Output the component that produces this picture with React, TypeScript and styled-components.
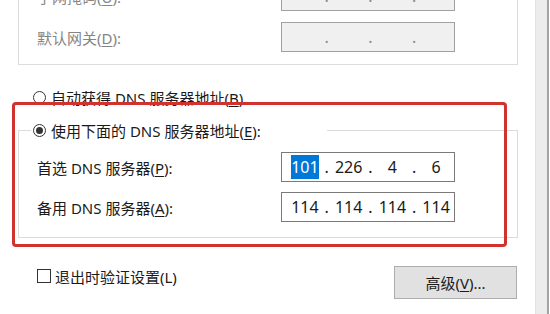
import React from "react";
import styled, { createGlobalStyle } from "styled-components";

const GlobalStyle = createGlobalStyle`
    html, body {
        margin: 0;
        padding: 0;
        background: #ffffff;
    }
    body {
        font-family: "Noto Sans", "Noto Sans CJK SC", sans-serif;
        font-size: 15px;
        color: #1a1a1a;
    }
`;

const Screen = styled.div`
    position: relative;
    width: 550px;
    height: 314px;
    display: flex;
    overflow: hidden;
    background: #ffffff;
`;

const Sheet = styled.div`
    flex: 1;
    display: flex;
    flex-direction: column;
    padding: 0 17px 0 18px;
`;

const WindowEdge = styled.div`
    width: 11px;
    background: #ececec;
    border-left: 1px solid #e2e2e2;
    border-right: 2px solid #a3a3a3;
    margin-right: 1px;
`;

const StaticGroup = styled.div`
    margin-top: -20px;
    border: 1px solid #dcdcdc;
    display: flex;
    flex-direction: column;
    gap: 11px;
    padding: 0 0 12px 18px;
`;

const FieldRow = styled.div`
    display: flex;
    align-items: center;
    height: 30px;
`;

const FieldLabel = styled.span<{ $disabled?: boolean }>`
    width: 244px;
    white-space: nowrap;
    color: ${(p) => (p.$disabled ? "#858585" : "#1a1a1a")};
`;

const Key = styled.span`
    text-decoration: underline;
    text-underline-offset: 2px;
`;

const IpBox = styled.div<{ $disabled?: boolean }>`
    box-sizing: border-box;
    width: 174px;
    height: 30px;
    padding-left: 5px;
    display: flex;
    align-items: center;
    border: 1px solid ${(p) => (p.$disabled ? "#a0a0a0" : "#7a7a7a")};
    background: ${(p) => (p.$disabled ? "#f0f0f0" : "#ffffff")};
    color: ${(p) => (p.$disabled ? "#8a8a8a" : "#1a1a1a")};
    font-size: 16px;
`;

const IpField = styled.span`
    width: 36px;
    text-align: center;
    white-space: nowrap;
`;

const IpDot = styled.span`
    width: 8px;
    text-align: center;
`;

const Selected = styled.span`
    background: #0078d7;
    color: #ffffff;
    padding: 1px 0;
`;

const OptionRow = styled.div`
    display: flex;
    align-items: center;
    gap: 5px;
    height: 20px;
    white-space: nowrap;
`;

const AutoOption = styled(OptionRow)`
    margin-top: 22px;
    padding-left: 15px;
`;

const RadioMark = styled.span<{ $checked?: boolean }>`
    box-sizing: border-box;
    width: 13px;
    height: 13px;
    border-radius: 50%;
    border: 1px solid #333333;
    background: #ffffff;
    display: grid;
    place-items: center;

    &::after {
        content: "";
        width: 7px;
        height: 7px;
        border-radius: 50%;
        background: ${(p) => (p.$checked ? "#333333" : "transparent")};
    }
`;

const DnsGroup = styled.fieldset`
    margin: 13px 0 0;
    padding: 12px 0 15px 12px;
    border: 1px solid #dcdcdc;
    min-width: 0;
`;

const DnsLegend = styled.legend`
    box-sizing: border-box;
    width: 296px;
    height: 20px;
    padding: 0 2px;
    display: flex;
    align-items: center;
    gap: 5px;
    white-space: nowrap;
`;

const DnsRows = styled.div`
    display: flex;
    flex-direction: column;
    gap: 10px;
    padding-left: 6px;
`;

const BottomRow = styled.div`
    margin-top: 28px;
    display: flex;
    align-items: flex-start;
    justify-content: space-between;
    padding: 0 1px 0 19px;
`;

const CheckOption = styled(OptionRow)`
    gap: 4px;
`;

const CheckMark = styled.span`
    box-sizing: border-box;
    width: 14px;
    height: 14px;
    border: 1px solid #333333;
    background: #ffffff;
`;

const AdvancedButton = styled.button`
    width: 123px;
    height: 33px;
    padding: 0;
    background: #e1e1e1;
    border: 1px solid #adadad;
    font: inherit;
    color: #1a1a1a;
`;

const Annotation = styled.div`
    position: absolute;
    left: 12px;
    top: 102px;
    width: 495px;
    height: 145px;
    box-sizing: border-box;
    border: 3px solid #d2322d;
    border-radius: 4px;
    pointer-events: none;
`;

function IpAddress({ parts, disabled, selectFirst }: { parts: string[]; disabled?: boolean; selectFirst?: boolean }) {
    return (
        <IpBox $disabled={disabled}>
            {parts.map((part, i) => (
                <React.Fragment key={i}>
                    {i > 0 && <IpDot>.</IpDot>}
                    <IpField>{i === 0 && selectFirst ? <Selected>{part}</Selected> : part}</IpField>
                </React.Fragment>
            ))}
        </IpBox>
    );
}

export default function App() {
    return (
        <>
            <GlobalStyle />
            <Screen>
                <Sheet>
                    <StaticGroup>
                        <FieldRow>
                            <FieldLabel $disabled>子网掩码(<Key>U</Key>):</FieldLabel>
                            <IpAddress parts={["", "", "", ""]} disabled />
                        </FieldRow>
                        <FieldRow>
                            <FieldLabel $disabled>默认网关(<Key>D</Key>):</FieldLabel>
                            <IpAddress parts={["", "", "", ""]} disabled />
                        </FieldRow>
                    </StaticGroup>

                    <AutoOption>
                        <RadioMark />
                        <span>自动获得 DNS 服务器地址(<Key>B</Key>)</span>
                    </AutoOption>

                    <DnsGroup>
                        <DnsLegend>
                            <RadioMark $checked />
                            <span>使用下面的 DNS 服务器地址(<Key>E</Key>):</span>
                        </DnsLegend>
                        <DnsRows>
                            <FieldRow>
                                <FieldLabel>首选 DNS 服务器(<Key>P</Key>):</FieldLabel>
                                <IpAddress parts={["101", "226", "4", "6"]} selectFirst />
                            </FieldRow>
                            <FieldRow>
                                <FieldLabel>备用 DNS 服务器(<Key>A</Key>):</FieldLabel>
                                <IpAddress parts={["114", "114", "114", "114"]} />
                            </FieldRow>
                        </DnsRows>
                    </DnsGroup>

                    <BottomRow>
                        <CheckOption>
                            <CheckMark />
                            <span>退出时验证设置(L)</span>
                        </CheckOption>
                        <AdvancedButton>高级(<Key>V</Key>)...</AdvancedButton>
                    </BottomRow>
                </Sheet>
                <WindowEdge />
                <Annotation />
            </Screen>
        </>
    );
}
